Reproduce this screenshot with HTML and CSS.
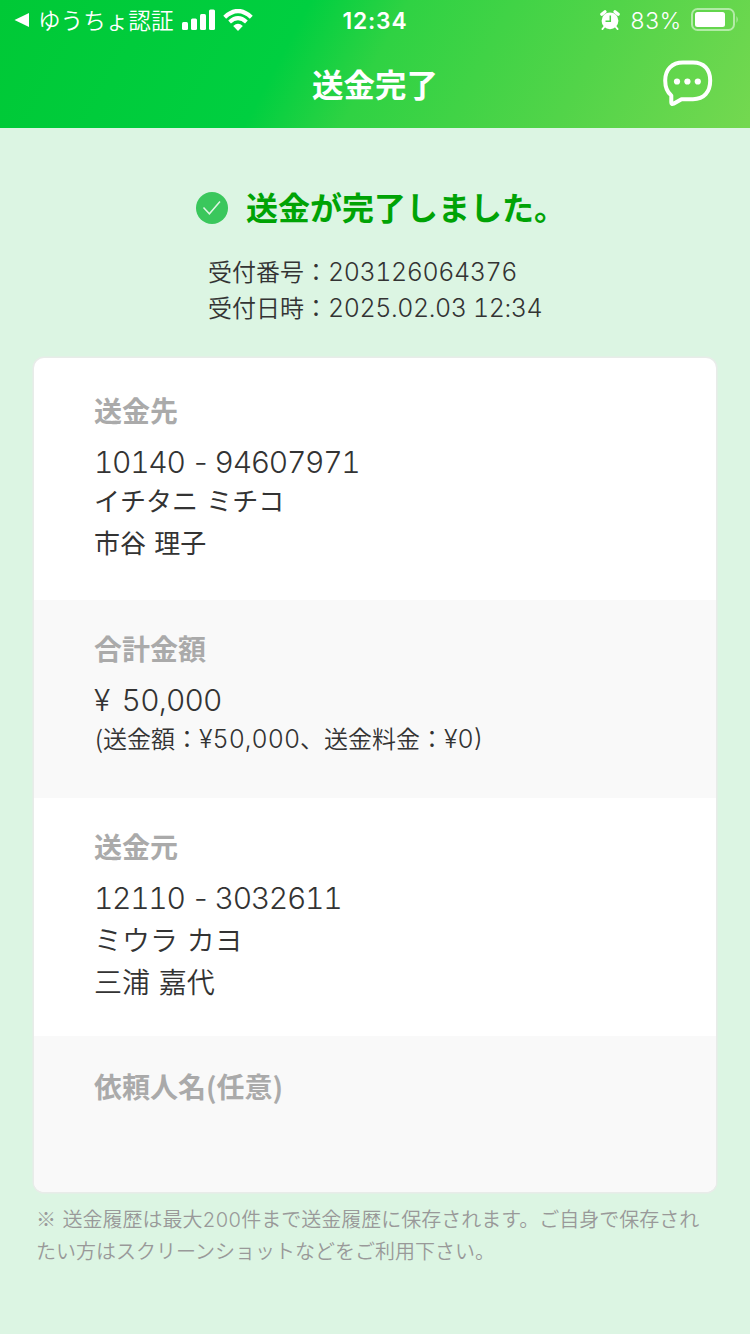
FILE: index.html
```html
<!DOCTYPE html>
<html lang="ja">
<head>
<meta charset="utf-8">
<title>送金完了</title>
<link rel="stylesheet" href="styles.css">
</head>
<body>
<header class="header">
  <div class="status">
    <div class="status-left">
      <svg class="back" width="16" height="16" viewBox="0 0 16 16"><path d="M0.5 8 L15 1 V15 Z" fill="#fff"/></svg>
      <span class="carrier">ゆうちょ認証</span>
      <svg class="signal" width="34" height="22" viewBox="0 0 34 22" fill="#fff"><rect x="0" y="13" width="6" height="8" rx="1.5"/><rect x="9" y="9.5" width="6" height="11.5" rx="1.5"/><rect x="18" y="5" width="6" height="16" rx="1.5"/><rect x="27" y="0.5" width="6" height="20.5" rx="1.5"/></svg>
      <svg class="wifi" width="30" height="22" viewBox="0 0 30 22" fill="none" stroke="#fff"><path d="M1.7 8.2 Q15 -4.2 28.3 8.2" stroke-width="4.2"/><path d="M6.6 13 Q15 5.4 23.4 13" stroke-width="4"/><path d="M10.2 17 Q15 12.6 19.8 17 L15 22 Z" fill="#fff" stroke="none"/></svg>
    </div>
    <span class="clock">12:34</span>
    <div class="status-right">
      <svg class="alarm" width="20" height="20" viewBox="0 0 20 20"><circle cx="10" cy="10.8" r="8.4" fill="#fff"/><path d="M1.8 4.3 L5 1.8 M15 1.8 L18.2 4.3" stroke="#fff" stroke-width="3.2" stroke-linecap="round"/><path d="M4.5 16.5 L2.5 19 M15.5 16.5 L17.5 19" stroke="#fff" stroke-width="2" stroke-linecap="round"/><path d="M10.3 5.5 V11.2 H5.5" fill="none" stroke="#4bd447" stroke-width="1.5"/></svg>
      <span class="percent">83%</span>
      <svg class="battery" width="48" height="24" viewBox="0 0 48 24"><rect x="1" y="1" width="42" height="21" rx="5.5" fill="none" stroke="#fff" stroke-opacity=".5" stroke-width="2"/><rect x="4" y="4" width="30" height="15" rx="2.5" fill="#fff"/><path d="M45.5 8 Q48 11.5 45.5 15 Z" fill="#fff" fill-opacity=".5"/></svg>
    </div>
  </div>
  <div class="navbar">
    <h1 class="title">送金完了</h1>
    <svg class="chat" width="50" height="48" viewBox="0 0 50 48"><path d="M20 2.5 H30 C41 2.5 47.2 9.5 47.2 20.5 C47.2 32 41 39.2 30 39.2 H18.5 L10.5 43.8 Q8.3 44.8 8.3 42.3 V35.5 C4 32 2.2 27 2.2 20.5 C2.2 9.5 9 2.5 20 2.5 Z" fill="none" stroke="#fff" stroke-width="4" stroke-linejoin="round"/><circle cx="14" cy="21.5" r="3.1" fill="#fff"/><circle cx="24.4" cy="21.5" r="3.1" fill="#fff"/><circle cx="34.8" cy="21.5" r="3.1" fill="#fff"/></svg>
  </div>
</header>
<main class="main">
  <div class="done">
    <svg class="check" width="32" height="32" viewBox="0 0 32 32"><circle cx="16" cy="16" r="16" fill="#3ac75c"/><path d="M7.5 15.5 L13.4 21.8 L24 9.5" fill="none" stroke="#dff6e4" stroke-width="1.5"/></svg>
    <h2 class="done-text">送金が完了しました。</h2>
  </div>
  <div class="receipt">
    <p class="receipt-row">受付番号：<span class="num">203126064376</span></p>
    <p class="receipt-row">受付日時：<span class="num">2025.02.03 12:34</span></p>
  </div>
  <div class="card">
    <section class="section to">
      <h3 class="label">送金先</h3>
      <p class="account">10140<span class="dash"> - </span>94607971</p>
      <p class="kana">イチタニ ミチコ</p>
      <p class="name">市谷 理子</p>
    </section>
    <section class="section shaded total">
      <h3 class="label">合計金額</h3>
      <p class="account amount">¥ 50,000</p>
      <p class="detail">(送金額：<span class="num">¥50,000</span>、送金料金：<span class="num">¥0)</span></p>
    </section>
    <section class="section from">
      <h3 class="label">送金元</h3>
      <p class="account">12110<span class="dash"> - </span>3032611</p>
      <p class="kana">ミウラ カヨ</p>
      <p class="name">三浦 嘉代</p>
    </section>
    <section class="section shaded client">
      <h3 class="label">依頼人名(任意)</h3>
    </section>
  </div>
  <p class="note">※ 送金履歴は最大<span class="num">200</span>件まで送金履歴に保存されます。ご自身で保存され<br>たい方はスクリーンショットなどをご利用下さい。</p>
</main>
</body>
</html>
```
FILE: styles.css
```css
* { box-sizing: border-box; }
body {
  margin: 0;
  width: 750px;
  height: 1334px;
  overflow: hidden;
  background: #dcf5e3;
  color: #333;
  font-family: "Noto Sans CJK JP", sans-serif;
  font-weight: 350;
}
h1, h2, h3, p { margin: 0; }
svg { display: block; flex: none; }

.header {
  height: 128px;
  color: #fff;
  background: linear-gradient(118deg, #00c936 0%, #00cf40 38%, #2fd243 50%, #52d449 76%, #74d850 100%);
}
.status {
  display: grid;
  grid-template-columns: 1fr auto 1fr;
  align-items: center;
  height: 40px;
  padding: 0 11px 0 14px;
}
.status-left, .status-right { display: flex; align-items: center; }
.status-right { justify-content: flex-end; }
.carrier { margin-left: 8px; font-size: 22.6px; line-height: 39px; padding-bottom: 1px; white-space: nowrap; }
.signal { margin-left: 8px; }
.wifi { margin-left: 7px; }
.clock { padding-top: 1px; font: 600 22.8px/39px Inter, sans-serif; letter-spacing: .8px; margin-left: -3px; }
.percent { margin: 0 9px 0 10px; padding-top: 2px; font: 350 22.8px/38px Inter, sans-serif; letter-spacing: .8px; }

.navbar {
  display: grid;
  grid-template-columns: 1fr auto 1fr;
  align-items: center;
  height: 88px;
  padding-right: 37px;
  padding-left: 37px;
}
.title { grid-column: 2; padding-bottom: 2px; font-size: 31.5px; line-height: 86px; font-weight: 700; }
.chat { justify-self: end; }

.main { padding: 60px 34px 0; }
.done { display: flex; align-items: center; height: 40px; padding-left: 162px; gap: 18px; }
.done-text { padding-bottom: 3px; color: #00a305; font-size: 32px; line-height: 37px; font-weight: 700; white-space: nowrap; }

.receipt { padding: 25px 0 1px 174px; }
.receipt-row { font-size: 24px; line-height: 36px; height: 36px; white-space: nowrap; }
.num { font-family: Inter, sans-serif; font-weight: 300; font-feature-settings: "tnum"; font-size: 25px; letter-spacing: -.42px; }

.card {
  margin-top: 32px;
  border-radius: 10px;
  background: #fff;
  box-shadow: 0 0 0 1.5px #e8ece9;
  overflow: hidden;
}
.section { padding: 33px 60px 0; }
.shaded { background: #f9f9f9; }
.to { height: 242px; }
.total { height: 198px; padding-top: 29px; }
.from { height: 238px; padding-top: 29px; }
.client { height: 156px; padding-top: 31px; }
.label { color: #aaa; font-size: 28px; line-height: 38px; font-weight: 700; }
.account { margin-top: 14px; font: 300 30px/38px Inter, sans-serif; font-feature-settings: "tnum"; letter-spacing: -1.3px; white-space: pre; }
.dash { display: inline-block; width: 30px; padding-left: 1px; text-align: center; font-feature-settings: normal; letter-spacing: 0; }
.amount { word-spacing: 5px; letter-spacing: -.85px; }
.kana, .name { font-size: 26px; line-height: 42px; font-weight: 400; word-spacing: 2.5px; }
.to .kana { margin-top: -2px; }
.detail { padding-left: 1px; font-size: 24px; line-height: 38px; white-space: nowrap; }
.detail .num { letter-spacing: 0; }
.from .kana, .from .name { font-size: 28px; font-weight: 350; }
.from .kana { margin-top: 1px; }

.note { padding: 11px 0 0 2px; color: #999; font-size: 20px; line-height: 32px; white-space: nowrap; word-spacing: 2px; }
.note .num { font-size: 20px; line-height: 1; letter-spacing: 0; }
```
